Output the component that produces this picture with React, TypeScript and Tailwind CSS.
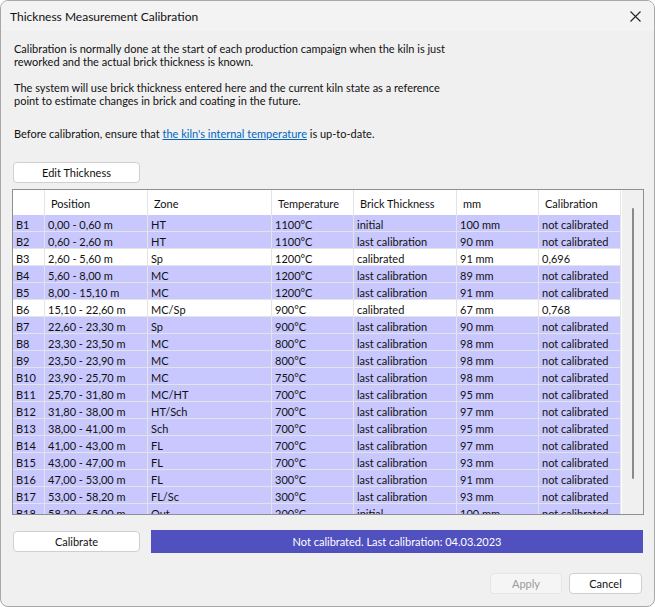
const rows = [
  ['B1', '0,00 - 0,60 m', 'HT', '1100°C', 'initial', '100 mm', 'not calibrated'],
  ['B2', '0,60 - 2,60 m', 'HT', '1100°C', 'last calibration', '90 mm', 'not calibrated'],
  ['B3', '2,60 - 5,60 m', 'Sp', '1200°C', 'calibrated', '91 mm', '0,696'],
  ['B4', '5,60 - 8,00 m', 'MC', '1200°C', 'last calibration', '89 mm', 'not calibrated'],
  ['B5', '8,00 - 15,10 m', 'MC', '1200°C', 'last calibration', '91 mm', 'not calibrated'],
  ['B6', '15,10 - 22,60 m', 'MC/Sp', '900°C', 'calibrated', '67 mm', '0,768'],
  ['B7', '22,60 - 23,30 m', 'Sp', '900°C', 'last calibration', '90 mm', 'not calibrated'],
  ['B8', '23,30 - 23,50 m', 'MC', '800°C', 'last calibration', '98 mm', 'not calibrated'],
  ['B9', '23,50 - 23,90 m', 'MC', '800°C', 'last calibration', '98 mm', 'not calibrated'],
  ['B10', '23,90 - 25,70 m', 'MC', '750°C', 'last calibration', '98 mm', 'not calibrated'],
  ['B11', '25,70 - 31,80 m', 'MC/HT', '700°C', 'last calibration', '95 mm', 'not calibrated'],
  ['B12', '31,80 - 38,00 m', 'HT/Sch', '700°C', 'last calibration', '97 mm', 'not calibrated'],
  ['B13', '38,00 - 41,00 m', 'Sch', '700°C', 'last calibration', '95 mm', 'not calibrated'],
  ['B14', '41,00 - 43,00 m', 'FL', '700°C', 'last calibration', '97 mm', 'not calibrated'],
  ['B15', '43,00 - 47,00 m', 'FL', '700°C', 'last calibration', '93 mm', 'not calibrated'],
  ['B16', '47,00 - 53,00 m', 'FL', '300°C', 'last calibration', '91 mm', 'not calibrated'],
  ['B17', '53,00 - 58,20 m', 'FL/Sc', '300°C', 'last calibration', '93 mm', 'not calibrated'],
  ['B18', '58,20 - 65,00 m', 'Out', '200°C', 'initial', '100 mm', 'not calibrated'],
];

const headers = ['', 'Position', 'Zone', 'Temperature', 'Brick Thickness', 'mm', 'Calibration'];
const widths = ['w-[32px]', 'w-[103px]', 'w-[124px]', 'w-[82px]', 'w-[103px]', 'w-[82px]', 'w-[82px]'];

export default function App() {
  return (
    <div className="w-[655px] h-[607px] bg-white">
      <div className="w-full h-full flex flex-col bg-[#f0f0f0] border border-[#a8a8a8] rounded-lg overflow-hidden text-[11px] leading-[13px] text-[#111] font-['Lato','Roboto',sans-serif]">
        {/* Title bar */}
        <div className="h-[30px] shrink-0 flex items-center justify-between bg-[#f3f3f3] pl-[9px] pr-[13px]">
          <span className="text-[12px]">Thickness Measurement Calibration</span>
          <svg width="11" height="11" viewBox="0 0 11 11" fill="none" stroke="#222" strokeWidth="1.1">
            <path d="M0.5 0.5 10.5 10.5M10.5 0.5 0.5 10.5" />
          </svg>
        </div>

        {/* Intro text */}
        <div className="pl-[13px] pt-[11px]">
          <p>Calibration is normally done at the start of each production campaign when the kiln is just</p>
          <p>reworked and the actual brick thickness is known.</p>
          <p className="mt-[13px]">The system will use brick thickness entered here and the current kiln state as a reference</p>
          <p>point to estimate changes in brick and coating in the future.</p>
          <p className="mt-[20px]">
            Before calibration, ensure that{' '}
            <a className="text-[#0067c0] underline">the kiln's internal temperature</a> is up-to-date.
          </p>
        </div>

        <button className="ml-[12px] mt-[22px] w-[127px] h-[21px] shrink-0 bg-white border border-[#cfcfcf] rounded">
          Edit Thickness
        </button>

        {/* Table */}
        <div className="ml-[11px] mt-[6px] w-[632px] h-[326px] shrink-0 flex border border-[#8f8f8f] bg-white overflow-hidden">
          <div className="w-[608px] shrink-0">
            <div className="flex h-[25px]">
              {headers.map((h, i) => (
                <div key={i} className={`${widths[i]} shrink-0 flex items-center pl-[6px] pt-[1px] border-r border-[#e4e4e4]`}>
                  {h}
                </div>
              ))}
            </div>
            {rows.map((row) => {
              const calibrated = row[4] === 'calibrated';
              return (
                <div key={row[0]} className={`flex h-[17px] border-b border-[#e4e4e4] ${calibrated ? 'bg-white' : 'bg-[#c8c8ff]'}`}>
                  {row.map((cell, i) => (
                    <div key={i} className={`${widths[i]} shrink-0 flex items-center pl-[3px] pt-[2px] border-r border-[#e4e4e4] whitespace-nowrap`}>
                      {cell}
                    </div>
                  ))}
                </div>
              );
            })}
          </div>
          <div className="flex-1 flex justify-center bg-[#f0f0f0] pt-[18px] ml-[1px]">
            <div className="w-[2px] h-[271px] bg-[#8a8a8a] rounded-full" />
          </div>
        </div>

        {/* Status row */}
        <div className="flex items-center mt-[15px] ml-[12px]">
          <button className="w-[127px] h-[21px] bg-white border border-[#cfcfcf] rounded">Calibrate</button>
          <div className="ml-[11px] w-[492px] h-[23px] flex items-center justify-center bg-[#5050bf] text-white">
            Not calibrated. Last calibration: 04.03.2023
          </div>
        </div>

        {/* Footer */}
        <div className="flex justify-end gap-[7px] mt-[20px] pr-[12px]">
          <button className="w-[72px] h-[21px] bg-[#f5f5f5] border border-[#e5e5e5] rounded text-[#9a9a9a]">Apply</button>
          <button className="w-[73px] h-[21px] bg-white border border-[#cfcfcf] rounded">Cancel</button>
        </div>
      </div>
    </div>
  );
}
